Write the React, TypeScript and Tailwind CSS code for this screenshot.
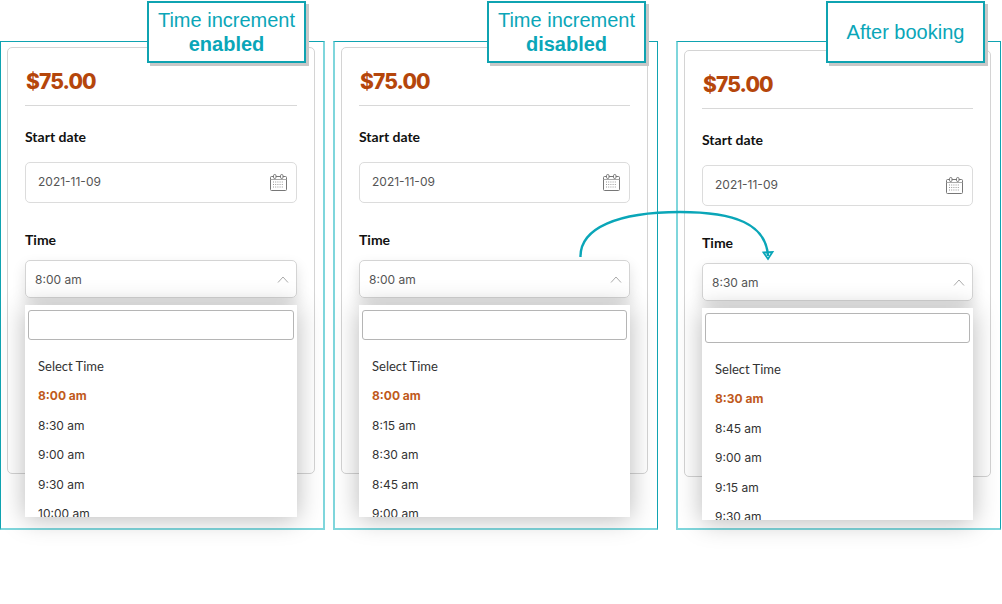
interface PanelProps {
    title: string;
    bold?: string;
    selected: string;
    times: string[];
    frameClass: string;
    cardClass: string;
    calloutClass: string;
    shifted?: boolean;
}

function CalendarIcon() {
    return (
        <svg width="19" height="19" viewBox="0 0 19 19" fill="none" stroke="#777" strokeWidth="1">
            <rect x="1.5" y="3.5" width="16" height="14" rx="1" />
            <path d="M1.5 6.5h16" stroke="#aaa" />
            <rect x="4.5" y="1.5" width="2.5" height="4" rx="1.2" fill="#fff" />
            <rect x="11.5" y="1.5" width="2.5" height="4" rx="1.2" fill="#fff" />
            <path d="M4 9h11M4 11.5h11M4 14h11" stroke="#999" strokeDasharray="1 1.2" />
        </svg>
    );
}

function Panel({ title, bold, selected, times, frameClass, cardClass, calloutClass, shifted }: PanelProps) {
    return (
        <div className={`relative w-[325px] h-[489px] border-t border-t-[#0fa3b1] border-b-2 border-b-[#7fd6dc] bg-white pl-[6px] ${frameClass}`}>
            <div className={`h-[427px] border border-[#d4d4d4] rounded-[5px] px-[17px] ${cardClass} ${shifted ? 'mt-[8px]' : 'mt-[5px]'}`}>
                <div className="h-[58px] flex items-center border-b border-[#d8d8d8] text-[21px] leading-none font-extrabold text-[#b5460b] font-['Inter',sans-serif] tracking-[-0.9px] pl-[1px] pt-[12px] pb-[2px]">
                    $75.00
                </div>
                <div className="mt-[21px] text-[14px] leading-[20px] font-bold text-[#111] font-['Lato',sans-serif]">Start date</div>
                <div className="mt-[15px] h-[41px] flex items-center justify-between border border-[#dcdcdc] rounded-[5px] pl-[12px] pr-[8px] text-[12px] text-[#555] font-['Inter',sans-serif]">
                    <span className="mb-[2px]">2021-11-09</span>
                    <CalendarIcon />
                </div>
                <div className="mt-[27px] text-[14px] leading-[20px] font-bold text-[#111] font-['Lato',sans-serif]">Time</div>
                <div className="relative mt-[10px]">
                    <div className="h-[38px] flex items-center justify-between border border-[#d4d4d4] rounded-[5px] pl-[9px] pr-[7px] pt-[1px] text-[12px] text-[#555] font-['Inter',sans-serif] shadow-[0_6px_14px_rgba(0,0,0,0.12)]">
                        {selected}
                        <svg width="12" height="7" viewBox="0 0 12 7" fill="none" stroke="#aaa" strokeWidth="1">
                            <path d="M1 6.5L6 1l5 5.5" />
                        </svg>
                    </div>
                    <div className="absolute left-0 right-0 top-[45px] h-[212px] overflow-hidden bg-white z-10 shadow-[0_2px_24px_rgba(0,0,0,0.28)]">
                        <div className="mx-[3px] mt-[5px] h-[30px] border border-[#b5b5b5] rounded-[3px] bg-white" />
                        <div className="pl-[13px] pt-[12px] text-[12px] font-['Inter',sans-serif] text-[#333]">
                            <div className="h-[29.5px] flex items-center font-['Lato',sans-serif] text-[13px]">Select Time</div>
                            {times.map((t) => (
                                <div key={t} className={`h-[29.5px] flex items-center ${t === selected ? 'font-bold text-[#c05a1c]' : ''}`}>
                                    {t}
                                </div>
                            ))}
                        </div>
                    </div>
                </div>
            </div>
            <div className={`absolute top-[-41px] w-[159px] h-[62px] z-20 flex flex-col justify-center items-center bg-white border-2 border-[#0fa3b1] shadow-[3px_3px_0_#c8c8c8] text-[20px] leading-[24px] text-[#0aa6b8] font-['Liberation_Sans',sans-serif] ${calloutClass}`}>
                <span>{title}</span>
                {bold && <span className="font-bold">{bold}</span>}
            </div>
        </div>
    );
}

export default function App() {
    return (
        <div className="relative w-[1002px] h-[604px] overflow-hidden bg-white pt-[41px]">
            <div className="flex">
                <Panel
                    title="Time increment"
                    bold="enabled"
                    selected="8:00 am"
                    times={['8:00 am', '8:30 am', '9:00 am', '9:30 am', '10:00 am']}
                    frameClass="border-l border-l-[#0fa3b1] border-r-2 border-r-[#7fd6dc]"
                    cardClass="w-[308px]"
                    calloutClass="right-[17px]"
                />
                <div className="ml-[8px]">
                    <Panel
                        title="Time increment"
                        bold="disabled"
                        selected="8:00 am"
                        times={['8:00 am', '8:15 am', '8:30 am', '8:45 am', '9:00 am']}
                        frameClass="border-l-2 border-l-[#7fd6dc] border-r border-r-[#0fa3b1]"
                        cardClass="w-[307px]"
                        calloutClass="right-[11px]"
                    />
                </div>
                <div className="ml-[18px]">
                    <Panel
                        title="After booking"
                        selected="8:30 am"
                        times={['8:30 am', '8:45 am', '9:00 am', '9:15 am', '9:30 am']}
                        frameClass="border-l-2 border-l-[#7fd6dc] border-r border-r-[#0fa3b1]"
                        cardClass="w-[307px]"
                        calloutClass="right-[15px]"
                        shifted
                    />
                </div>
            </div>
            <svg className="absolute left-0 top-0 z-30 pointer-events-none" width="1002" height="604" fill="none" stroke="#0aa6b8" strokeWidth="2.4">
                <path d="M580.5 257C580 228 618 212 680 212C735 212 766 224 768 256" />
                <path d="M763.5 252.5L772.5 252L768 259Z" strokeWidth="1.8" />
            </svg>
        </div>
    );
}
